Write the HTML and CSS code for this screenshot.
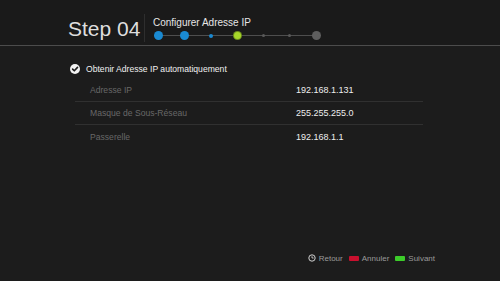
FILE: index.html
```html
<!DOCTYPE html>
<html>
<head>
<meta charset="utf-8">
<link rel="stylesheet" href="styles.css">
</head>
<body>
<div class="screen">
  <header class="header">
    <div class="step">Step 04</div>
    <div class="divider"></div>
    <div class="title-block">
      <div class="title">Configurer Adresse IP</div>
      <div class="dots">
        <span class="slot"><span class="dot big blue"></span></span>
        <span class="slot"><span class="dot big blue"></span></span>
        <span class="slot"><span class="dot small blue"></span></span>
        <span class="slot"><span class="dot green"></span></span>
        <span class="slot"><span class="dot tiny grey"></span></span>
        <span class="slot"><span class="dot tiny grey"></span></span>
        <span class="slot"><span class="dot big dgrey"></span></span>
      </div>
    </div>
  </header>

  <main class="content">
    <div class="check-row">
      <svg class="check" width="10" height="10" viewBox="0 0 10 10">
        <circle cx="5" cy="5" r="5" fill="#f2f2f2"/>
        <path d="M2.6 5.1 L4.3 6.8 L7.5 3.4" fill="none" stroke="#1c1c1c" stroke-width="1.6" stroke-linecap="round" stroke-linejoin="round"/>
      </svg>
      <span class="check-label">Obtenir Adresse IP automatiquement</span>
    </div>
    <div class="rows">
      <div class="row"><span class="label">Adresse IP</span><span class="value">192.168.1.131</span></div>
      <div class="row"><span class="label">Masque de Sous-Réseau</span><span class="value">255.255.255.0</span></div>
      <div class="row last"><span class="label">Passerelle</span><span class="value">192.168.1.1</span></div>
    </div>
  </main>

  <footer class="footer">
    <svg class="back" width="8" height="8" viewBox="0 0 8 8">
      <circle cx="4" cy="4" r="3.2" fill="none" stroke="#cfcfcf" stroke-width="1"/>
      <path d="M4 2.2 V4 H5.6" fill="none" stroke="#cfcfcf" stroke-width="0.9"/>
    </svg>
    <span class="ftext">Retour</span>
    <span class="key red"></span>
    <span class="ftext">Annuler</span>
    <span class="key green-key"></span>
    <span class="ftext">Suivant</span>
  </footer>
</div>
</body>
</html>
```

FILE: styles.css
```css
* { box-sizing: border-box; }
html, body {
  margin: 0;
  padding: 0;
  background: #1c1c1c;
}
body {
  font-family: "Liberation Sans", Arial, sans-serif;
  color: #eeeeee;
}
.screen {
  width: 500px;
  height: 281px;
  display: flex;
  flex-direction: column;
  background: #1c1c1c;
}
.header {
  height: 46px;
  display: flex;
  align-items: flex-start;
  padding-left: 68px;
  background: #1a1a1a;
  border-bottom: 1px solid #4c4c4c;
}
.step {
  margin-top: 17px;
  font-size: 21px;
  line-height: 24px;
  color: #dedede;
  width: 76px;
}
.divider {
  margin-top: 14px;
  width: 1px;
  height: 28px;
  background: #2e2e2e;
}
.title-block {
  margin-left: 8px;
  padding-top: 17px;
  display: flex;
  flex-direction: column;
}
.title {
  font-size: 10px;
  line-height: 12px;
  color: #e6e6e6;
}
.dots {
  margin-top: 2px;
  margin-left: 0.5px;
  display: flex;
  gap: 17.4px;
  height: 9px;
  background: linear-gradient(#4e4e4e, #4e4e4e) center / 100% 1px no-repeat;
}
.slot {
  width: 9px;
  height: 9px;
  display: flex;
  align-items: center;
  justify-content: center;
}
.dot {
  display: block;
  border-radius: 50%;
}
.big { width: 9px; height: 9px; }
.small { width: 4px; height: 4px; }
.tiny { width: 3px; height: 3px; }
.blue { background: #1a8ad2; }
.grey { background: #5a5a5a; }
.dgrey { background: #5e5e5e; }
.green {
  width: 7px;
  height: 7px;
  background: #a6d62a;
  box-shadow: 0 0 0 1px #6f8f1e;
}
.content {
  padding: 13px 77px 0 70px;
}
.check-row {
  height: 20px;
  display: flex;
  align-items: center;
  gap: 6px;
}
.check { display: block; }
.check-label {
  font-size: 8.6px;
  color: #f0f0f0;
}
.rows {
  margin-left: 5px;
}
.row {
  height: 23px;
  display: flex;
  align-items: center;
  border-bottom: 1px solid #303030;
  padding-left: 15px;
}
.row.last { border-bottom: none; }
.label {
  width: 206px;
  font-size: 8.6px;
  color: #686868;
}
.value {
  font-size: 9px;
  color: #eeeeee;
}
.footer {
  margin-top: auto;
  height: 12px;
  margin-bottom: 17px;
  display: flex;
  align-items: center;
  justify-content: flex-end;
  padding-right: 65px;
}
.back { display: block; margin-right: 3px; }
.ftext {
  font-size: 8px;
  color: #9a9a9a;
}
.key {
  width: 10px;
  height: 5px;
  border-radius: 1px;
}
.red { background: #c8102e; margin-left: 6px; margin-right: 3px; }
.green-key { background: #3ccc2a; margin-left: 6px; margin-right: 3px; }
```
